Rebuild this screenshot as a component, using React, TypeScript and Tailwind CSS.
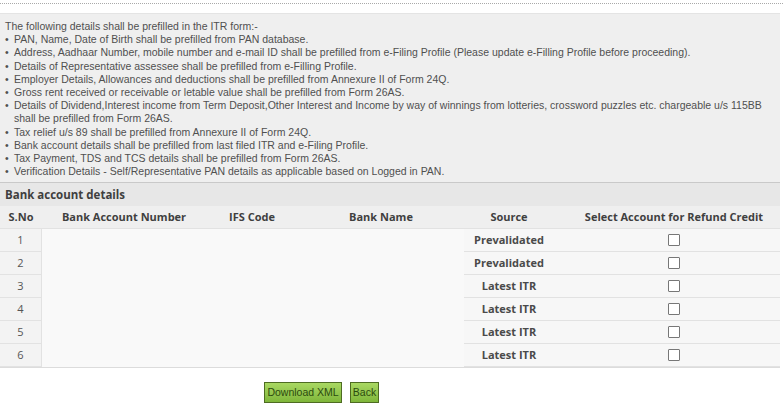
import React from "react"

const notes = [
    "PAN, Name, Date of Birth shall be prefilled from PAN database.",
    "Address, Aadhaar Number, mobile number and e-mail ID shall be prefilled from e-Filing Profile (Please update e-Filling Profile before proceeding).",
    "Details of Representative assessee shall be prefilled from e-Filling Profile.",
    "Employer Details, Allowances and deductions shall be prefilled from Annexure II of Form 24Q.",
    "Gross rent received or receivable or letable value shall be prefilled from Form 26AS.",
    "Details of Dividend,Interest income from Term Deposit,Other Interest and Income by way of winnings from lotteries, crossword puzzles etc. chargeable u/s 115BB shall be prefilled from Form 26AS.",
    "Tax relief u/s 89 shall be prefilled from Annexure II of Form 24Q.",
    "Bank account details shall be prefilled from last filed ITR and e-Filing Profile.",
    "Tax Payment, TDS and TCS details shall be prefilled from Form 26AS.",
    "Verification Details - Self/Representative PAN details as applicable based on Logged in PAN.",
]

const rows = [
    { no: 1, source: "Prevalidated" },
    { no: 2, source: "Prevalidated" },
    { no: 3, source: "Latest ITR" },
    { no: 4, source: "Latest ITR" },
    { no: 5, source: "Latest ITR" },
    { no: 6, source: "Latest ITR" },
]

const cols = "grid grid-cols-[42px_164px_92px_166px_90px_226px]"

const App: React.FC = () => {
    return (
        <div className="w-[783px] h-[407px] bg-white overflow-hidden font-['Liberation_Sans',Arial,sans-serif]">
            <div className="mt-[3px] border-t border-dotted border-[#a9a9a9]" />

            <div className="mt-[9px] mr-[3px] bg-[#efefef] border-t border-[#e4e4e4] border-b border-b-[#c9c9c9] pt-[6px] pb-[4px] px-[5px] text-[10.5px] leading-[13.2px] text-[#505050]">
                <div>The following details shall be prefilled in the ITR form:-</div>
                <ul>
                    {notes.map((n, i) => (
                        <li key={i} className="flex">
                            <span className="w-[9px] shrink-0">•</span>
                            <span>{n}</span>
                        </li>
                    ))}
                </ul>
            </div>

            <div className="mr-[3px] font-['Open_Sans',sans-serif] text-[#3f3f3f]">
                <div className="h-[23px] bg-[#e7e7e7] px-[5px] flex items-center text-[11.5px] font-bold">Bank account details</div>

                <div className={`${cols} h-[23px] bg-[#efefef] border-b border-[#e2e2e2] text-[11px] font-bold items-center text-center`}>
                    <div>S.No</div>
                    <div>Bank Account Number</div>
                    <div>IFS Code</div>
                    <div>Bank Name</div>
                    <div>Source</div>
                    <div className="pl-[14px]">Select Account for Refund Credit</div>
                </div>

                {rows.map((r) => (
                    <div key={r.no} className={`${cols} h-[23px] text-[11px] text-center`}>
                        <div className="flex items-center justify-center bg-[#f3f3f3] border-b border-r border-[#e2e2e2] text-[#555] font-normal">{r.no}</div>
                        <div className="col-span-3 bg-[#f9f9f9]" />
                        <div className="flex items-center justify-center bg-[#f7f7f7] border-b border-[#e2e2e2] font-bold text-[#4a4a4a]">{r.source}</div>
                        <div className="flex items-center justify-center pl-[14px] bg-[#f7f7f7] border-b border-[#e2e2e2]">
                            <span className="w-[12px] h-[12px] border border-[#777] bg-white rounded-[1px]" />
                        </div>
                    </div>
                ))}
                <div className="h-px bg-[#dcdcdc]" />
            </div>

            <div className="mt-[14px] flex gap-[8px] pl-[264px]">
                <button className="h-[21px] w-[78px] border border-[#4e6c22] bg-gradient-to-b from-[#a9d862] to-[#7fb63a] text-[10.5px] text-[#2c4a0e] font-['Liberation_Sans',Arial,sans-serif]">
                    Download XML
                </button>
                <button className="h-[21px] w-[29px] border border-[#4e6c22] bg-gradient-to-b from-[#a9d862] to-[#7fb63a] text-[10.5px] text-[#2c4a0e] font-['Liberation_Sans',Arial,sans-serif]">
                    Back
                </button>
            </div>
        </div>
    )
}

export default App
